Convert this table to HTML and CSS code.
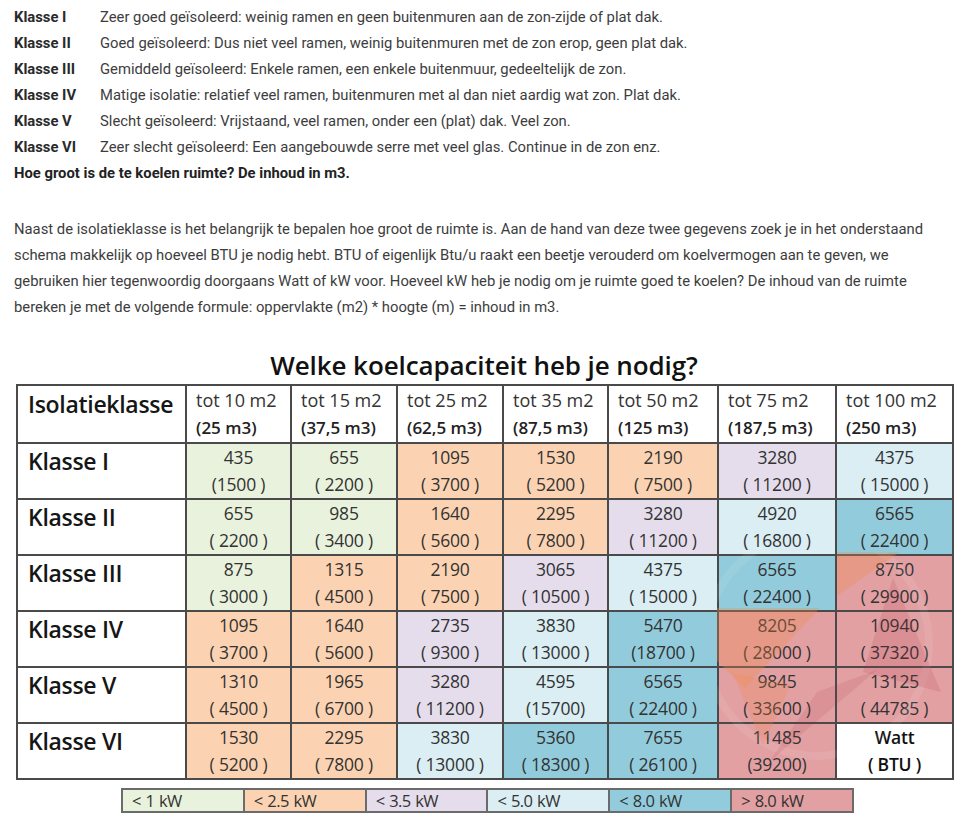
FILE: index.html
```html
<!DOCTYPE html>
<html lang="nl">
<head>
<meta charset="utf-8">
<title>Welke koelcapaciteit heb je nodig?</title>
<link rel="stylesheet" href="styles.css">
</head>
<body>
<div class="page">
  <div class="classes">
    <div class="row"><b class="lbl">Klasse I</b><span>Zeer goed geïsoleerd: weinig ramen en geen buitenmuren aan de zon-zijde of plat dak.</span></div>
    <div class="row"><b class="lbl">Klasse II</b><span>Goed geïsoleerd: Dus niet veel ramen, weinig buitenmuren met de zon erop, geen plat dak.</span></div>
    <div class="row"><b class="lbl">Klasse III</b><span>Gemiddeld geïsoleerd: Enkele ramen, een enkele buitenmuur, gedeeltelijk de zon.</span></div>
    <div class="row"><b class="lbl">Klasse IV</b><span>Matige isolatie: relatief veel ramen, buitenmuren met al dan niet aardig wat zon. Plat dak.</span></div>
    <div class="row"><b class="lbl">Klasse V</b><span>Slecht geïsoleerd: Vrijstaand, veel ramen, onder een (plat) dak. Veel zon.</span></div>
    <div class="row"><b class="lbl">Klasse VI</b><span>Zeer slecht geïsoleerd: Een aangebouwde serre met veel glas. Continue in de zon enz.</span></div>
    <div class="row"><b class="q">Hoe groot is de te koelen ruimte? De inhoud in m3.</b></div>
  </div>

  <p class="intro">Naast de isolatieklasse is het belangrijk te bepalen hoe groot de ruimte is. Aan de hand van deze twee gegevens zoek je in het onderstaand schema makkelijk op hoeveel BTU je nodig hebt. BTU of eigenlijk Btu/u raakt een beetje verouderd om koelvermogen aan te geven, we gebruiken hier tegenwoordig doorgaans Watt of kW voor. Hoeveel kW heb je nodig om je ruimte goed te koelen? De inhoud van de ruimte bereken je met de volgende formule: oppervlakte (m2) * hoogte (m) = inhoud in m3.</p>

  <div class="chart">
    <h2 class="title">Welke koelcapaciteit heb je nodig?</h2>
    <div class="table-wrap">
      <table class="cap">
        <colgroup>
          <col class="c0"><col class="c1"><col class="c2"><col class="c3"><col class="c4"><col class="c5"><col class="c6"><col class="c7">
        </colgroup>
        <thead>
          <tr>
            <th class="rowhead">Isolatieklasse</th>
            <th><span class="l1">tot 10 m2</span><span class="l2">(25 m3)</span></th>
            <th><span class="l1">tot 15 m2</span><span class="l2">(37,5 m3)</span></th>
            <th><span class="l1">tot 25 m2</span><span class="l2">(62,5 m3)</span></th>
            <th><span class="l1">tot 35 m2</span><span class="l2">(87,5 m3)</span></th>
            <th><span class="l1">tot 50 m2</span><span class="l2">(125 m3)</span></th>
            <th><span class="l1">tot 75 m2</span><span class="l2">(187,5 m3)</span></th>
            <th><span class="l1">tot 100 m2</span><span class="l2">(250 m3)</span></th>
          </tr>
        </thead>
        <tbody>
          <tr>
            <th class="rowhead">Klasse I</th>
            <td class="g"><span>435</span><span>(1500 )</span></td>
            <td class="g"><span>655</span><span>( 2200 )</span></td>
            <td class="o"><span>1095</span><span>( 3700 )</span></td>
            <td class="o"><span>1530</span><span>( 5200 )</span></td>
            <td class="o"><span>2190</span><span>( 7500 )</span></td>
            <td class="p"><span>3280</span><span>( 11200 )</span></td>
            <td class="lb"><span>4375</span><span>( 15000 )</span></td>
          </tr>
          <tr>
            <th class="rowhead">Klasse II</th>
            <td class="g"><span>655</span><span>( 2200 )</span></td>
            <td class="g"><span>985</span><span>( 3400 )</span></td>
            <td class="o"><span>1640</span><span>( 5600 )</span></td>
            <td class="o"><span>2295</span><span>( 7800 )</span></td>
            <td class="p"><span>3280</span><span>( 11200 )</span></td>
            <td class="lb"><span>4920</span><span>( 16800 )</span></td>
            <td class="b"><span>6565</span><span>( 22400 )</span></td>
          </tr>
          <tr>
            <th class="rowhead">Klasse III</th>
            <td class="g"><span>875</span><span>( 3000 )</span></td>
            <td class="o"><span>1315</span><span>( 4500 )</span></td>
            <td class="o"><span>2190</span><span>( 7500 )</span></td>
            <td class="p"><span>3065</span><span>( 10500 )</span></td>
            <td class="lb"><span>4375</span><span>( 15000 )</span></td>
            <td class="b"><span>6565</span><span>( 22400 )</span></td>
            <td class="r"><span>8750</span><span>( 29900 )</span></td>
          </tr>
          <tr>
            <th class="rowhead">Klasse IV</th>
            <td class="o"><span>1095</span><span>( 3700 )</span></td>
            <td class="o"><span>1640</span><span>( 5600 )</span></td>
            <td class="p"><span>2735</span><span>( 9300 )</span></td>
            <td class="lb"><span>3830</span><span>( 13000 )</span></td>
            <td class="b"><span>5470</span><span>(18700 )</span></td>
            <td class="r"><span>8205</span><span>( 28000 )</span></td>
            <td class="r"><span>10940</span><span>( 37320 )</span></td>
          </tr>
          <tr>
            <th class="rowhead">Klasse V</th>
            <td class="o"><span>1310</span><span>( 4500 )</span></td>
            <td class="o"><span>1965</span><span>( 6700 )</span></td>
            <td class="p"><span>3280</span><span>( 11200 )</span></td>
            <td class="lb"><span>4595</span><span>(15700)</span></td>
            <td class="b"><span>6565</span><span>( 22400 )</span></td>
            <td class="r"><span>9845</span><span>( 33600 )</span></td>
            <td class="r"><span>13125</span><span>( 44785 )</span></td>
          </tr>
          <tr>
            <th class="rowhead">Klasse VI</th>
            <td class="o"><span>1530</span><span>( 5200 )</span></td>
            <td class="o"><span>2295</span><span>( 7800 )</span></td>
            <td class="lb"><span>3830</span><span>( 13000 )</span></td>
            <td class="b"><span>5360</span><span>( 18300 )</span></td>
            <td class="b"><span>7655</span><span>( 26100 )</span></td>
            <td class="r"><span>11485</span><span>(39200)</span></td>
            <td class="unit"><span>Watt</span><span>( BTU )</span></td>
          </tr>
        </tbody>
      </table>
      <svg class="watermark" viewBox="0 0 240 230" aria-hidden="true">
        <circle cx="100" cy="92" r="112" fill="none" stroke="#ffffff" stroke-opacity="0.08" stroke-width="8"/>
        <polygon points="120,0 183,0 120,44" fill="#f28a4a" fill-opacity="0.3"/>
        <polygon points="0,56 103,56 28,136 0,109" fill="#f28a4a" fill-opacity="0.3"/>
        <polygon points="16,122 74,132 46,194" fill="#f28a4a" fill-opacity="0.24"/>
        <polygon points="176,26 224,140 146,120" fill="#a83244" fill-opacity="0.15"/>
        <polygon points="100,140 160,118 52,210" fill="#a83244" fill-opacity="0.12"/>
      </svg>
    </div>
    <div class="legend">
      <div class="lg g">&lt; 1 kW</div>
      <div class="lg o">&lt; 2.5 kW</div>
      <div class="lg p">&lt; 3.5 kW</div>
      <div class="lg lb">&lt; 5.0 kW</div>
      <div class="lg b">&lt; 8.0 kW</div>
      <div class="lg r">&gt; 8.0 kW</div>
    </div>
  </div>
</div>
</body>
</html>
```

FILE: styles.css
```css
* { box-sizing: border-box; }

html, body {
  margin: 0;
  padding: 0;
  background: #ffffff;
}

body {
  font-family: Roboto, "Liberation Sans", sans-serif;
  font-size: 14.8px;
  color: #3d3d3d;
}

.page {
  padding: 4px 20px 0 14px;
}

.classes .row {
  display: flex;
  line-height: 26px;
  height: 26px;
}

.lbl {
  width: 86px;
  flex: none;
  font-weight: 700;
  color: #2a2a2a;
}

.q {
  font-weight: 700;
  color: #222222;
}

.intro {
  margin: 30px 0 0;
  line-height: 26px;
}

.chart {
  display: flex;
  flex-direction: column;
  align-items: flex-start;
  margin-top: 27px;
  font-family: "Open Sans", "Noto Sans", sans-serif;
  color: #2f2f2f;
}

.title {
  margin: 0 0 1px 2px;
  width: 936px;
  text-align: center;
  font-size: 26px;
  line-height: 36px;
  font-weight: 600;
  color: #111111;
  letter-spacing: -0.1px;
}

.table-wrap {
  position: relative;
  margin-left: 2px;
}

.cap {
  border-collapse: collapse;
  table-layout: fixed;
  width: 936px;
}

.c0 { width: 169px; }
.c1 { width: 105px; }
.c2 { width: 106px; }
.c3 { width: 106px; }
.c4 { width: 105px; }
.c5 { width: 110px; }
.c6 { width: 118px; }
.c7 { width: 117px; }

.cap th,
.cap td {
  border: 2px solid #4a4a4a;
  height: 56px;
  padding: 0;
  vertical-align: top;
}

.cap thead th {
  text-align: left;
  font-weight: 400;
  padding-left: 9px;
  background: #ffffff;
}

.cap thead th span {
  display: block;
  line-height: 28px;
  font-size: 18px;
  white-space: nowrap;
}

.cap thead th .l1 {
  font-weight: 400;
  color: #333333;
}

.cap thead th .l2 {
  font-weight: 600;
  font-size: 17px;
  color: #222222;
}

.cap .rowhead {
  text-align: left;
  font-size: 23px;
  font-weight: 600;
  line-height: 30px;
  letter-spacing: -0.3px;
  padding: 0 0 0 10px;
  color: #161616;
  background: #ffffff;
}

.cap thead .rowhead {
  padding-top: 3px;
  padding-left: 10px;
}

.cap tbody .rowhead {
  padding-top: 2px;
}

.cap td {
  text-align: center;
}

.cap td span {
  display: block;
  font-size: 17.5px;
  font-weight: 400;
  line-height: 27px;
  letter-spacing: -0.2px;
  color: #333333;
  white-space: pre;
}

.cap td.unit span {
  font-weight: 600;
  color: #111111;
}

.g { background: #e9f2dd; }
.o { background: #fcd3b2; }
.p { background: #e6ddec; }
.lb { background: #daeef4; }
.b { background: #92ccdc; }
.r { background: #e2a0a3; }
.unit { background: #ffffff; }

.watermark {
  position: absolute;
  left: 701px;
  top: 168px;
  width: 240px;
  height: 230px;
  pointer-events: none;
}

.legend {
  display: flex;
  margin: 8px 0 0 107px;
  border: 2px solid #6b6b6b;
  width: 733px;
}

.lg {
  flex: 1 1 0;
  height: 21px;
  line-height: 21px;
  padding-left: 9px;
  font-size: 16.5px;
  font-weight: 400;
  letter-spacing: -0.6px;
  word-spacing: 1px;
  color: #333333;
  border-left: 2px solid #6b6b6b;
}

.lg:first-child {
  border-left: 0;
}
```
